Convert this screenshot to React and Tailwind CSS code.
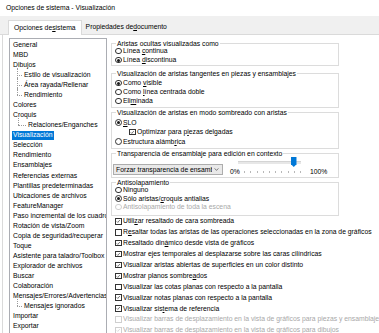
import React from "react";

const tree = [
  ["General", 0],
  ["MBD", 0],
  ["Dibujos", 0],
  ["Estilo de visualización", 1, false, "a"],
  ["Área rayada/Rellenar", 1, false, "a"],
  ["Rendimiento", 1, true, "a"],
  ["Colores", 0],
  ["Croquis", 0],
  ["Relaciones/Enganches", 1, true, "b"],
  ["Visualización", 0, "sel"],
  ["Selección", 0],
  ["Rendimiento", 0],
  ["Ensamblajes", 0],
  ["Referencias externas", 0],
  ["Plantillas predeterminadas", 0],
  ["Ubicaciones de archivos", 0],
  ["FeatureManager", 0],
  ["Paso incremental de los cuadros de giro", 0],
  ["Rotación de vista/Zoom", 0],
  ["Copia de seguridad/recuperar", 0],
  ["Toque", 0],
  ["Asistente para taladro/Toolbox", 0],
  ["Explorador de archivos", 0],
  ["Buscar", 0],
  ["Colaboración", 0],
  ["Mensajes/Errores/Advertencias", 0],
  ["Mensajes ignorados", 1, true, "a"],
  ["Importar", 0],
  ["Exportar", 0],
];

function Radio({ checked, disabled }) {
  return (
    <span
      className={`shrink-0 w-[6.5px] h-[6.5px] rounded-full border bg-white flex items-center justify-center ${
        disabled ? "border-[#cfcfcf]" : "border-[#333333]"
      }`}
    >
      {checked && <span className="w-[3px] h-[3px] rounded-full bg-[#1a1a1a]" />}
    </span>
  );
}

function Check({ checked, disabled }) {
  return (
    <span
      className={`shrink-0 w-[6.5px] h-[6.5px] border bg-white flex items-center justify-center ${
        disabled ? "border-[#cfcfcf]" : "border-[#333333]"
      }`}
    >
      {checked && (
        <svg viewBox="0 0 10 10" className="w-full h-full">
          <path
            d="M1.6 5.2 L4 7.6 L8.6 2.2"
            fill="none"
            stroke={disabled ? "#c4c4c4" : "#1a1a1a"}
            strokeWidth="1.3"
          />
        </svg>
      )}
    </span>
  );
}

function Group({ legend, className, children }) {
  return (
    <div className={`relative border border-[#dcdcdc] shrink-0 ${className}`}>
      <span className="absolute left-[4px] top-[-4.5px] bg-white px-[1px] leading-[8px] whitespace-nowrap">
        {legend}
      </span>
      {children}
    </div>
  );
}

function RRow({ checked, disabled, h, children }) {
  return (
    <div className={`flex items-center gap-[1.5px] pl-[3px] ${h} whitespace-nowrap`}>
      <Radio checked={checked} disabled={disabled} />
      <span className={disabled ? "text-[#a8a8a8]" : ""}>{children}</span>
    </div>
  );
}

function CRow({ checked, disabled, children }) {
  return (
    <div className="flex items-center gap-[1.5px] pl-[4px] h-[10.9px] whitespace-nowrap">
      <Check checked={checked} disabled={disabled} />
      <span className={disabled ? "text-[#a8a8a8]" : ""}>{children}</span>
    </div>
  );
}

function TreeItem({ item }) {
  const [label, lvl, flag, kind] = item;
  if (lvl === 0) {
    return (
      <div className="h-[10.07px] flex items-center pl-[3px] whitespace-nowrap">
        {flag === "sel" ? (
          <span className="h-[9px] flex items-center bg-[#0078d7] text-white px-[1px] -ml-[1px]">{label}</span>
        ) : (
          <span>{label}</span>
        )}
      </div>
    );
  }
  const lineLeft = kind === "b" ? "left-[8.3px]" : "left-[6.5px]";
  const stubW = kind === "b" ? "w-[8px]" : "w-[5.5px]";
  const pad = kind === "b" ? "pl-[18px]" : "pl-[14px]";
  return (
    <div className={`relative h-[10.07px] flex items-center ${pad} whitespace-nowrap`}>
      <span
        className={`absolute ${lineLeft} top-[-2px] border-l border-dotted border-[#9a9a9a] ${
          flag ? "h-[7px]" : "h-[12.07px]"
        }`}
      />
      <span className={`absolute ${lineLeft} top-[5px] ${stubW} border-t border-dotted border-[#9a9a9a]`} />
      <span>{label}</span>
    </div>
  );
}

export default function App() {
  const ticks = Array.from({ length: 11 });
  return (
    <div className="w-[379px] h-[333px] overflow-hidden bg-white text-black text-[6.8px] leading-[8px] font-['Liberation_Sans',Arial,sans-serif]">
      <div className="h-[16px] pl-[6px] flex items-center">Opciones de sistema - Visualización</div>
      <div className="h-[19px] bg-[#f0f0f0] border-b border-[#dadada] flex items-end pl-[8px]">
        <div className="h-[15px] bg-white border border-b-0 border-[#dadada] -mb-px flex items-center px-[5px] whitespace-nowrap shrink-0">
          Opciones de <u>s</u>istema
        </div>
        <div className="h-[14px] flex items-center pl-[4px] whitespace-nowrap shrink-0">
          Propiedades de <u>d</u>ocumento
        </div>
      </div>
      <div className="flex ml-[2px] border-l border-[#dadada] h-[298px]">
        <div className="mt-[3px] ml-[6px] w-[98px] h-[300px] border border-[#abadb3] overflow-hidden pt-[0.67px] shrink-0">
          {tree.map((it, i) => (
            <TreeItem key={i} item={it} />
          ))}
        </div>
        <div className="ml-[4px] flex flex-col w-[228px] shrink-0">
          <Group legend="Aristas ocultas visualizadas como" className="mt-[8px] h-[23px] pt-[2.5px]">
            <RRow h="h-[9px]">Línea <u>c</u>ontinua</RRow>
            <RRow h="h-[9px]" checked>
              Línea <u>d</u>iscontinua
            </RRow>
          </Group>
          <Group
            legend="Visualización de aristas tangentes en piezas y ensamblajes"
            className="mt-[7px] h-[35px] pt-[4.5px]"
          >
            <RRow h="h-[9px]" checked>
              Como <u>v</u>isible
            </RRow>
            <RRow h="h-[9px]">
              Como <u>l</u>ínea centrada doble
            </RRow>
            <RRow h="h-[9px]">
              Eli<u>m</u>inada
            </RRow>
          </Group>
          <Group
            legend="Visualización de aristas en modo sombreado con aristas"
            className="mt-[4px] h-[37px] pt-[4.75px]"
          >
            <RRow h="h-[9.5px]" checked>
              <u>S</u>LO
            </RRow>
            <div className="flex items-center gap-[1.5px] pl-[17px] h-[9.5px] whitespace-nowrap">
              <Check checked />
              <span>
                Optimizar para p<u>i</u>ezas delgadas
              </span>
            </div>
            <RRow h="h-[9.5px]">
              Estructura alámb<u>r</u>ica
            </RRow>
          </Group>
          <Group legend="Transparencia de ensamblaje para edición en contexto" className="mt-[4px] h-[25px]">
            <div className="flex items-start">
              <div className="mt-[10px] ml-[1px] w-[110px] h-[11px] border border-[#adadad] bg-[#e9e9e9] flex items-center pl-[2px] pr-[3px] shrink-0">
                <span className="flex-1 overflow-hidden whitespace-nowrap">Forzar transparencia de ensamblaje</span>
                <svg viewBox="0 0 6 4" className="w-[5px] h-[3px] ml-[2px] shrink-0">
                  <path d="M0.5 0.5 L3 3.2 L5.5 0.5" fill="none" stroke="#333" strokeWidth="0.8" />
                </svg>
              </div>
              <span className="mt-[14px] w-[15px] pl-[7px] shrink-0 whitespace-nowrap">0%</span>
              <div className="relative mt-[3px] w-[63px] h-[17px] shrink-0">
                <div className="mt-[4px] h-[2.5px] bg-[#e7e7e7] border-t border-[#d4d4d4]" />
                <svg viewBox="0 0 6 11" className="absolute left-[53px] top-0 w-[5.5px] h-[10px]">
                  <path d="M0 0 H6 V8 L3 11 L0 8 Z" fill="#0078d7" />
                </svg>
                <div className="absolute left-0 right-0 top-[14px] flex justify-between">
                  {ticks.map((_, i) => (
                    <span key={i} className="w-[1px] h-[2px] bg-[#b8b8b8]" />
                  ))}
                </div>
              </div>
              <span className="mt-[14px] ml-[9px] shrink-0 whitespace-nowrap">100%</span>
            </div>
          </Group>
          <Group legend="Antisolapamiento" className="mt-[4px] h-[34px] pt-[2.75px]">
            <RRow h="h-[8.5px]">Ninguno</RRow>
            <RRow h="h-[8.5px]" checked>
              Sólo aristas/<u>c</u>roquis antialias
            </RRow>
            <RRow h="h-[8.5px]" disabled>
              Antisolapamiento de toda la escena
            </RRow>
          </Group>
          <div className="flex flex-col">
            <CRow checked>
              Utili<u>z</u>ar resaltado de cara sombreada
            </CRow>
            <CRow>
              R<u>e</u>saltar todas las aristas de las operaciones seleccionadas en la zona de gráficos
            </CRow>
            <CRow checked>
              Resaltado din<u>á</u>mico desde vista de gráficos
            </CRow>
            <CRow checked>Mostrar ejes temporales al desplazarse sobre las caras cilíndricas</CRow>
            <CRow checked>Visualizar aristas abiertas de superficies en un color distinto</CRow>
            <CRow checked>
              Mostrar planos sombre<u>a</u>dos
            </CRow>
            <CRow>Visualizar las cotas planas con respecto a la pantalla</CRow>
            <CRow checked>Visualizar notas planas con respecto a la pantalla</CRow>
            <CRow checked>
              Visualizar sis<u>t</u>ema de referencia
            </CRow>
            <CRow disabled>
              Visualizar barras de desplazamiento en la vista de gráficos para piezas y ensamblajes
            </CRow>
            <CRow checked disabled>
              Visualizar barras de desplazamiento en la vista de gráficos para dibujos
            </CRow>
          </div>
        </div>
      </div>
    </div>
  );
}
